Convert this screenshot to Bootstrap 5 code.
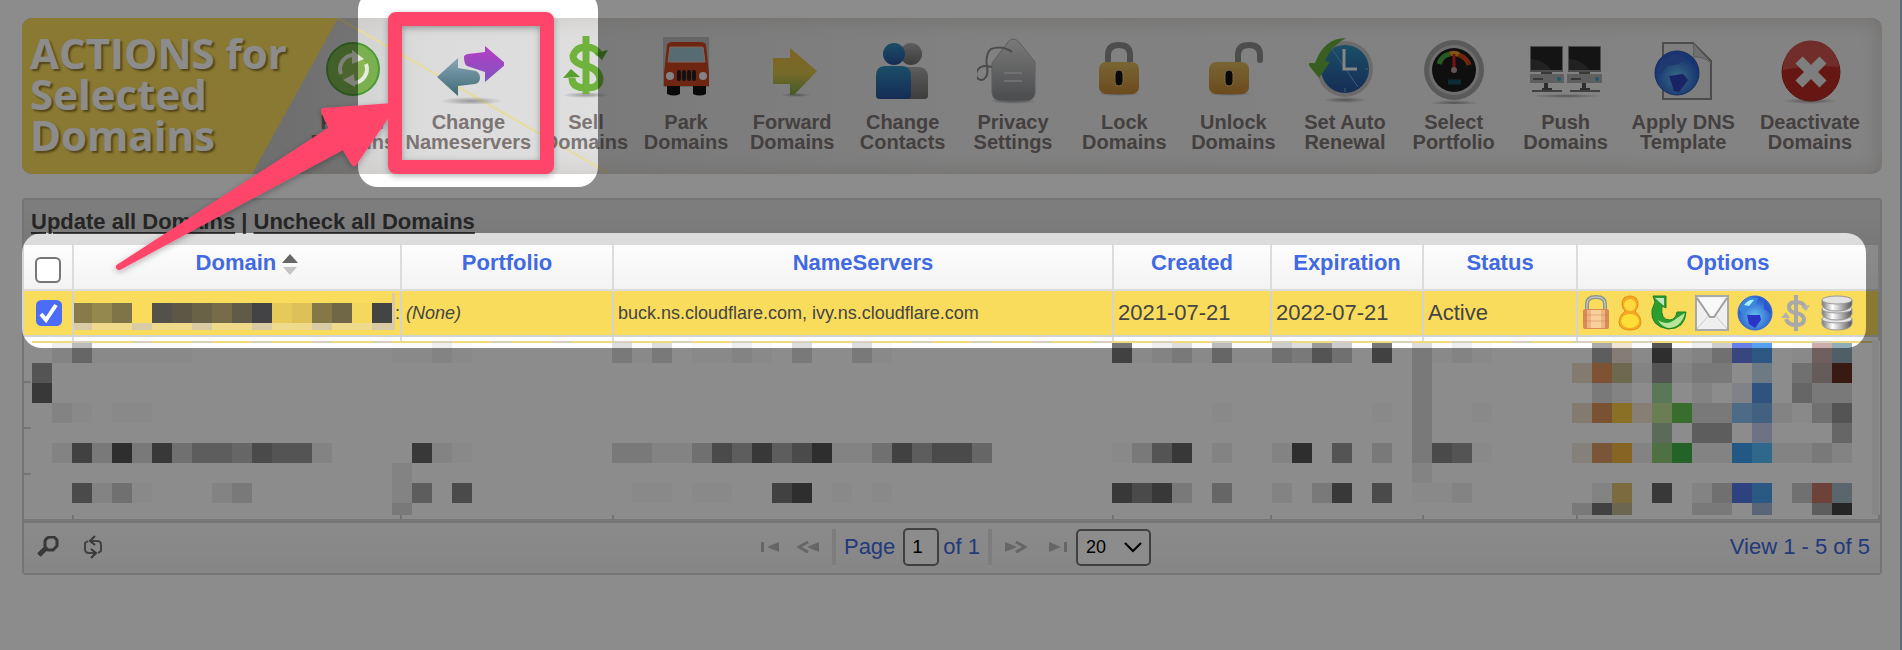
<!DOCTYPE html>
<html lang="en">
<head>
<meta charset="utf-8">
<meta name="viewport" content="width=device-width, initial-scale=1">
<title>Domain manager</title>
<link rel="stylesheet" href="https://cdn.jsdelivr.net/npm/bootstrap@5.3.0/dist/css/bootstrap.min.css">
<style>
body { font-family: "Liberation Sans", Arial, sans-serif; font-size: 22px; line-height: 26px; color: #444; background: #fff; }
.page { border-right: 2px solid #5b6b81; padding: 18px 18px 0 22px; }

/* Action bar */
.actionbar { height: 156px; border-radius: 10px; overflow: hidden; background: linear-gradient(90deg, #cacaca 14%, #dcdcdc 22%, #dedede 30%, #ebebeb 50%, #efefef 100%); box-shadow: inset 0 0 22px #cdc9c5; }
.actionbar h1 { width: 316px; flex: none; margin: 0; padding: 14px 0 0 8px; height: 156px; font: 700 42px/41px "Open Sans", "Noto Sans", sans-serif; color: #fff; text-shadow: 2px 2px 2px rgba(70,50,0,.55); background: #f9dc5c; clip-path: polygon(0 0, 100% 0, 230px 100%, 0 100%); }
.streak { left: 316px; top: 0; width: 270px; height: 156px; }
.actions { flex: 1; margin-left: -86px; padding-right: 22px; display: grid; justify-items: end; align-items: start; grid-template-columns: 143fr 136fr 97fr 100fr 106fr 111fr 107fr 114fr 109fr 110fr 109fr 113fr 127fr 125fr; }
.act { padding: 16px 0 0; border: 0; background: none; font-size: 20px; line-height: 20px; font-weight: 700; color: #7c7573; text-align: center; white-space: nowrap; }
.act svg { display: block; width: 72px; height: 70px; margin: 0 auto 8px; }

/* Grid */
.gridbox { margin-top: 24px; border: 2px solid #d5d5d5; border-radius: 4px; background: #fff; }
.caption { height: 45px; padding: 9px 7px 0; background: linear-gradient(#e6e6e6, #dbdbdb); font-weight: 700; }
.caption a { color: #444; text-decoration: underline; text-underline-offset: 3px; text-decoration-thickness: 2px; }
.dgrid { width: 100%; table-layout: fixed; border-collapse: separate; border-spacing: 0; }
.dgrid th { height: 46px; padding: 5px 0 0; vertical-align: top; text-align: center; color: #4169e1; background: linear-gradient(#fdfdfd, #f3f3f3); border-right: 2px solid #dcdcdc; border-bottom: 2px solid #dcdcdc; }
.dgrid .sorted { padding-left: 20px; }
.dgrid td { height: 46px; padding: 0 4px; background: #f9dc5c; border-right: 2px solid #d3d3d3; border-bottom: 2px solid #d3d3d3; white-space: nowrap; overflow: hidden; color: #444; line-height: 24px; }
.dgrid .f18 { font-size: 18px; }
.dgrid .rest { height: 182px; padding: 0; background: #fff; border: 0; }
.rest svg { display: block; width: 100%; }
.tick { width: 26px; height: 26px; margin: 0; display: block; border: 2px solid #767676; border-radius: 5px; box-shadow: none; }
.tick.form-check-input:checked { border-color: #4a6cf7; background-color: #4a6cf7; background-size: 22px; background-image: url("data:image/svg+xml,%3Csvg xmlns='http://www.w3.org/2000/svg' viewBox='0 0 22 22'%3E%3Cpath d='M3 12l5 6L18 3' fill='none' stroke='%23fff' stroke-width='4'/%3E%3C/svg%3E"); }
.optbtn { border: 0; background: none; padding: 0; flex: none; line-height: 0; }
.footer { border-top: 4px solid #d8d8d8; height: 54px; background: linear-gradient(#fcfcfc, #f4f4f4); color: #4169e1; padding: 0 10px 2px 13px; }
.side { flex: 1 1 0; }
.iconbtn { border: 0; background: none; padding: 0; line-height: 0; }
.sep { width: 4px; height: 36px; background: #e4e4e4; }
.pagebox { width: 36px; height: 38px; border: 2px solid #767676; border-radius: 5px; padding: 0 7px; font-size: 19px; color: #000; background: #fff; }
.sizebox { width: 75px; height: 37px; padding: 0 0 0 8px; border: 2px solid #767676; border-radius: 5px; font-size: 18px; color: #000; line-height: 30px; background-color: #fff; background-position: right 6px center; background-size: 20px; background-image: url("data:image/svg+xml,%3Csvg xmlns='http://www.w3.org/2000/svg' viewBox='0 0 20 20'%3E%3Cpath d='M2 6l8 8 8-8' fill='none' stroke='%23000' stroke-width='2'/%3E%3C/svg%3E"); }

/* Dimming layer and marker drawings above the page */
.veil { inset: 0; width: 100%; height: 100%; pointer-events: none; }
.spot-row { width: calc(100% - 56px); }
</style>
</head>
<body>
<main class="page position-relative min-vh-100">
  <section class="actionbar d-flex position-relative" aria-label="Actions">
    <svg class="streak position-absolute" viewBox="0 0 270 156"><path d="M0 0L270 155" stroke="#e8dc9c" stroke-width="2"/></svg>
    <h1>ACTIONS for<br>Selected<br>Domains</h1>
    <div class="actions position-relative">
      <button class="act" type="button"><svg viewBox="0 0 72 70"><circle cx="36" cy="35" r="26" fill="#7ab04f" stroke="#4c9a37" stroke-width="2"/><circle cx="36" cy="35" r="14" fill="#8cb655"/><path d="M24 40a14 14 0 0 1 12-19" fill="none" stroke="#e6eddc" stroke-width="4"/><path d="M35 16l12 9-12 5z" fill="#e6eddc"/><path d="M49 30a14 14 0 0 1-13 19" fill="none" stroke="#e6eddc" stroke-width="4"/><path d="M37 40L26 46l12 7z" fill="#e6eddc"/></svg>Renew<br>Domains</button>
      <button class="act" type="button"><svg viewBox="0 0 72 70"><defs><linearGradient id="gt" x2="0" y2="1"><stop stop-color="#8ba6b8"/><stop offset="1" stop-color="#3d6a72"/></linearGradient><linearGradient id="gp" x2="0" y2="1"><stop stop-color="#b73cc4"/><stop offset="1" stop-color="#7d55c0"/></linearGradient><radialGradient id="sh"><stop stop-color="#777" stop-opacity=".7"/><stop offset="1" stop-color="#777" stop-opacity="0"/></radialGradient></defs><ellipse cx="39" cy="67" rx="31" ry="4" fill="url(#sh)"/><path d="M5 43l21-19v10l18 3q4 2 4 7t-5 6l-17 2v10z" fill="url(#gt)"/><path d="M32 23q0-2 4-3l17-2V12l21 18-21 18V38l-18-6q-3-2-3-9z" fill="url(#gp)"/></svg>Change<br>Nameservers</button>
      <button class="act" type="button"><svg viewBox="0 0 72 70"><ellipse cx="36" cy="61" rx="24" ry="3" fill="url(#sh)"/><path d="M50 21Q46 13 36 13T23 22q0 7 13 10t14 13q0 9-14 9T22 44M36 2v58" fill="none" stroke="#6fb23c" stroke-width="7"/><path d="M45 19l13-3-6 10zM13 44l8-9 9 8z" fill="#55a02f"/></svg>Sell<br>Domains</button>
      <button class="act" type="button"><svg viewBox="0 0 72 70"><path d="M13 3h46v50H13z" fill="#bbb"/><path d="M17 50h13v10q-6 3-13 0zM43 50h13v10q-6 3-13 0z" fill="#111"/><path d="M17 11q1-3 5-3h29q4 0 5 3l3 28v13H14V39z" fill="#c94524"/><path d="M20 13h33l2 15H18z" fill="#9fc4cf" stroke="#e8bba8"/><path d="M29 38v7m5-7v7m5-7v7m5-7v7" stroke="#222" stroke-width="4" stroke-linecap="round"/><circle cx="20" cy="42" r="4" fill="#eee"/><circle cx="53" cy="42" r="4" fill="#eee"/></svg>Park<br>Domains</button>
      <button class="act" type="button"><svg viewBox="0 0 72 70"><defs><linearGradient id="gf" x2="0" y2="1"><stop stop-color="#eab543"/><stop offset=".55" stop-color="#d5c24a"/><stop offset="1" stop-color="#7ca545"/></linearGradient></defs><ellipse cx="40" cy="61" rx="15" ry="2" fill="url(#sh)"/><path d="M17 24h17V14l27 23-23 24h-4V50H17z" fill="url(#gf)"/></svg>Forward<br>Domains</button>
      <button class="act" type="button"><svg viewBox="0 0 72 70"><defs><linearGradient id="gb" x2="0" y2="1"><stop stop-color="#318fbd"/><stop offset="1" stop-color="#28529a"/></linearGradient><linearGradient id="gg" x2="0" y2="1"><stop stop-color="#aaa"/><stop offset="1" stop-color="#6e6e6e"/></linearGradient></defs><circle cx="44" cy="20" r="11" fill="url(#gg)"/><path d="M34 33h19q8 2 8 9v20q0 3-4 3H34z" fill="url(#gg)"/><circle cx="27" cy="20" r="11" fill="url(#gb)"/><path d="M9 42q0-10 9-10h17q9 0 9 10v20q0 3-4 3H13q-4 0-4-3z" fill="url(#gb)"/></svg>Change<br>Contacts</button>
      <button class="act" type="button"><svg viewBox="0 0 72 70"><defs><linearGradient id="gy" x2="0" y2="1"><stop stop-color="#ddd"/><stop offset="1" stop-color="#898b8e"/></linearGradient></defs><ellipse cx="36" cy="67" rx="24" ry="3" fill="url(#sh)"/><path d="M31 8q5-6 11 0l16 20v32q-2 7-10 7H25q-9 0-10-8V29z" fill="url(#gy)" stroke="#aaa"/><path d="M35 18Q25 11 14 15 8 20 10 33m0-1Q2 31-1 39q0 7 6 7 7-2 5-14l5 1" fill="none" stroke="#8b8b8b" stroke-width="2"/><path d="M27 39h18m-18 8h18" stroke="#ccc" stroke-width="2"/></svg>Privacy<br>Settings</button>
      <button class="act" type="button"><svg viewBox="0 0 72 70"><defs><linearGradient id="gl" x2="0" y2="1"><stop stop-color="#dcb95f"/><stop offset="1" stop-color="#c58735"/></linearGradient></defs><ellipse cx="31" cy="60" rx="22" ry="2" fill="url(#sh)"/><path d="M20 30v-9q0-10 11-10t11 10v9" fill="none" stroke="#8d8d8d" stroke-width="6"/><rect x="11" y="28" width="40" height="32" rx="7" fill="url(#gl)"/><rect x="27" y="36" width="8" height="16" rx="4" fill="#111" stroke="#dcc07a"/></svg>Lock<br>Domains</button>
      <button class="act" type="button"><svg viewBox="0 0 72 70"><ellipse cx="33" cy="60" rx="22" ry="2" fill="url(#sh)"/><path d="M41 30v-9q0-10 11-10t11 10v5" fill="none" stroke="#8d8d8d" stroke-width="6" stroke-linecap="round"/><rect x="12" y="28" width="40" height="32" rx="7" fill="url(#gl)"/><rect x="28" y="36" width="8" height="16" rx="4" fill="#111" stroke="#dcc07a"/></svg>Unlock<br>Domains</button>
      <button class="act" type="button"><svg viewBox="0 0 72 70"><ellipse cx="36" cy="66" rx="22" ry="3" fill="url(#sh)"/><circle cx="36" cy="35" r="28" fill="#c4c4c4"/><circle cx="36" cy="35" r="24" fill="url(#gb)"/><path d="M23 15l26 38M36 54v4M56 35h3" fill="none" stroke="#6cb0cf" stroke-width="1"/><path d="M35 15v20h13" fill="none" stroke="#f2f2f2" stroke-width="3"/><path d="M37 4Q15 4 6 29L-2 29 10 44 21 28l-5-1Q22 12 37 4z" fill="#67ac3d"/></svg>Set Auto<br>Renewal</button>
      <button class="act" type="button"><svg viewBox="0 0 72 70"><ellipse cx="36" cy="69" rx="24" ry="3" fill="url(#sh)"/><circle cx="36" cy="36" r="30" fill="#a5a5a5"/><circle cx="36" cy="36" r="25" fill="#c9c9c9"/><circle cx="36" cy="36" r="22" fill="#1d1d1d"/><path d="M21 30q3-9 11-10" fill="none" stroke="#4aa53c" stroke-width="5"/><path d="M32 20q5-2 9 1" fill="none" stroke="#e79a25" stroke-width="5"/><path d="M41 21q8 3 10 10" fill="none" stroke="#d24219" stroke-width="5"/><path d="M36 36V20" stroke="#d22" stroke-width="3"/><circle cx="36" cy="36" r="3" fill="#b99"/><path d="M30 48h13" stroke="#155060" stroke-width="5"/></svg>Select<br>Portfolio</button>
      <button class="act" type="button"><svg viewBox="0 0 72 70"><g id="pc"><path d="M0 12h33v26H0z" fill="#8a8a8a"/><path d="M1 13h31v23H1z" fill="#262626"/><path d="M1 25q14 1 20 11H1z" fill="#3c3c3c"/><path d="M-1 40h35v9H-1z" fill="#adadad"/><path d="M11 39h11M3 45h10" stroke="#666" stroke-width="2"/><circle cx="29" cy="45" r="2" fill="#2fa5c5"/><path d="M16 49v7m-4 0h10" stroke="#555" stroke-width="4"/><path d="M2 57h30" stroke="#777" stroke-width="2"/></g><use href="#pc" x="38"/><ellipse cx="36" cy="62" rx="36" ry="2" fill="url(#sh)"/></svg>Push<br>Domains</button>
      <button class="act" type="button"><svg viewBox="0 0 72 70"><defs><radialGradient id="gw" cy=".6"><stop stop-color="#64c4ee"/><stop offset="1" stop-color="#2d5fd0"/></radialGradient></defs><path d="M16 9h30l18 18v38H16z" fill="#e6e6e6" stroke="#8b8b8b" stroke-width="2"/><path d="M46 9q2 9 0 14 10-1 18 6" fill="#ccc" stroke="#aaa"/><circle cx="30" cy="39" r="22" fill="url(#gw)" stroke="#2750ae"/><path d="M16 25q12-8 22-2-4 8-12 8t-10 8q-6 2-6 0 1-10 6-14z" fill="#3a68c8"/><path d="M22 42l14-2 5 6-9 12-5-1z" fill="#3142b8"/></svg>Apply DNS<br>Template</button>
      <button class="act" type="button"><svg viewBox="0 0 72 70"><ellipse cx="36" cy="67" rx="27" ry="3" fill="url(#sh)"/><circle cx="37" cy="38" r="29" fill="#bb2b26" stroke="#a5231f"/><path d="M9 36a28 28 0 0 1 56-3Q40 30 9 36z" fill="#cc524d"/><path d="M25 26l24 24m0-24L25 50" stroke="#e6e6e6" stroke-width="10"/></svg>Deactivate<br>Domains</button>
    </div>
  </section>

  <section class="gridbox" aria-label="Domain list">
    <div class="caption"><a href="#">Update all Domains</a> | <a href="#">Uncheck all Domains</a></div>
    <table class="dgrid">
      <colgroup><col style="width:50px"><col style="width:328px"><col style="width:212px"><col><col style="width:158px"><col style="width:152px"><col style="width:154px"><col style="width:302px"></colgroup>
      <thead>
        <tr>
          <th scope="col" class="pt-2"><input type="checkbox" class="form-check-input tick mx-auto mt-1" aria-label="Select all domains"></th>
          <th scope="col" class="sorted">Domain <svg width="16" height="22" viewBox="0 0 16 22"><path d="M8 1l8 9H0z" fill="#666"/><path d="M8 22l7-8H1z" fill="#c4c4c4"/></svg></th>
          <th scope="col">Portfolio</th><th scope="col">NameServers</th><th scope="col">Created</th><th scope="col">Expiration</th><th scope="col">Status</th><th scope="col">Options</th>
        </tr>
      </thead>
      <tbody>
        <tr>
          <td><input type="checkbox" checked class="form-check-input tick ms-2" aria-label="Select this domain"></td>
          <td class="p-0"><div class="d-flex align-items-center f18"><svg id="redact" class="flex-shrink-0" width="321" height="40" viewBox="0 0 321 40" shape-rendering="crispEdges"></svg>:</div></td>
          <td class="f18"><em>(None)</em></td>
          <td class="f18">buck.ns.cloudflare.com, ivy.ns.cloudflare.com</td>
          <td>2021-07-21</td><td>2022-07-21</td><td>Active</td>
          <td><div class="d-flex align-items-center gap-2">
            <button class="optbtn" type="button" aria-label="Lock"><svg width="28" height="36" viewBox="0 0 28 36"><path d="M5 16V9q0-7 9-7t9 7v7" fill="none" stroke="#8f9590" stroke-width="4"/><path d="M5 16V9q0-7 9-7t9 7v7" fill="none" stroke="#d5d8cc" stroke-width="1"/><rect x="1" y="14" width="26" height="20" rx="2" fill="#d98a55"/><path d="M5 15h18v18H5z" fill="#edb486"/><path d="M9 15h10v18H9z" fill="#f7d09a"/><path d="M1 20h26M1 26h26" stroke="#c9774a" opacity=".4"/></svg></button>
            <button class="optbtn" type="button" aria-label="Contact"><svg width="24" height="36" viewBox="0 0 24 36"><path d="M12 1q8 0 8 8 0 4-3 7 6 5 6 11 0 8-11 8T1 27q0-6 6-11-3-3-3-7 0-8 8-8z" fill="#f5a821" stroke="#e79212"/><ellipse cx="12" cy="10" rx="6" ry="6" fill="#ffd93f"/><ellipse cx="12" cy="26" rx="9" ry="7" fill="#ffdf35"/></svg></button>
            <button class="optbtn" type="button" aria-label="Renew"><svg width="37" height="36" viewBox="0 0 37 36"><path d="M3 1h13v12l-4-2q-2 14 8 14 6-1 7-8h9Q35 34 18 34 0 31 2 15l3-8z" fill="#2c9e30" stroke="#1c8222"/><path d="M8 25q9 7 19-2l8-5Q31 33 18 33q-7-2-10-8z" fill="#b9e59a"/><path d="M5 3h9v8z" fill="#bfe6c0"/></svg></button>
            <button class="optbtn" type="button" aria-label="Email"><svg width="34" height="36" viewBox="0 0 34 36"><path d="M1 1h32v34H1z" fill="#efefef" stroke="#a9a9a9" stroke-width="2"/><path d="M2 34l12-14m18 14L20 20" stroke="#c9c9c9"/><path d="M2 3l13 19h4L32 3" fill="#f8f8f8" stroke="#a0a0a0" stroke-width="2"/></svg></button>
            <button class="optbtn" type="button" aria-label="DNS"><svg width="36" height="36" viewBox="0 0 36 36"><circle cx="18" cy="18" r="17" fill="url(#gw)" stroke="#3768d0"/><path d="M2 14Q5 4 13 2l8 1-3 8-9 3-3 6z" fill="#3c86e0"/><path d="M27 5q7 6 7 14l-7-5z" fill="#2b55d2"/><path d="M10 20l13 0 1 5-6 8-6-4z" fill="#2b35c5"/><path d="M7 10q5-6 10-5l-5 6z" fill="#a8f0ff"/></svg></button>
            <button class="optbtn" type="button" aria-label="Sell"><svg width="31" height="36" viewBox="0 0 31 36"><path d="M24 12Q22 7 15 7T8 12t7 6 8 6q0 6-8 6T5 24M15 0v36" fill="none" stroke="#a8a8a8" stroke-width="4"/><path d="M20 12l9-2-4 6zM0 23l5-6 4 6z" fill="#b2b2b2"/></svg></button>
            <button class="optbtn" type="button" aria-label="Hosting"><svg width="34" height="36" viewBox="0 0 34 36"><defs><linearGradient id="gd"><stop stop-color="#777"/><stop offset=".35" stop-color="#fff"/><stop offset="1" stop-color="#555"/></linearGradient></defs><g id="disk"><path d="M2 24v5q2 6 15 6t15-6v-5z" fill="url(#gd)" stroke="#999"/><ellipse cx="17" cy="24" rx="15" ry="4" fill="#e3e3e3" stroke="#999"/></g><use href="#disk" y="-10"/><use href="#disk" y="-19"/></svg></button>
          </div></td>
        </tr>
        <tr><td colspan="8" class="rest"><svg id="mosaic" height="182" viewBox="0 0 1856 182" preserveAspectRatio="none" shape-rendering="crispEdges"></svg></td></tr>
      </tbody>
    </table>
    <div class="footer d-flex align-items-center">
      <div class="side d-flex align-items-center gap-4">
        <button class="iconbtn" type="button" aria-label="Find"><svg width="22" height="22" viewBox="0 0 22 22"><path d="M9 3l3-2h5l3 3v6l-4 4h-5L8 11V5zM9 12l-7 7" fill="none" stroke="#666" stroke-width="3"/><path d="M8 13l-6 6" stroke="#666" stroke-width="5"/></svg></button>
        <button class="iconbtn" type="button" aria-label="Reload"><svg width="20" height="24" viewBox="0 0 20 24"><path d="M8 6h6q4 0 4 4v6l-3 2M12 18H6q-4 0-4-4V8l3-2" fill="none" stroke="#777" stroke-width="2"/><path d="M12 1L7 6l5 4M8 14l5 4-5 5" fill="none" stroke="#666" stroke-width="2"/></svg></button>
      </div>
      <div class="d-flex align-items-center ms-1">
        <button class="iconbtn me-3" type="button" aria-label="First page"><svg width="20" height="12" viewBox="0 0 20 12"><path d="M1 1h3v10H1zM19 1v10L7 6z" fill="#bbb"/></svg></button>
        <button class="iconbtn me-2" type="button" aria-label="Previous page"><svg width="24" height="12" viewBox="0 0 24 12"><path d="M23 1v10L11 6z" fill="#bbb"/><path d="M12 1L3 6l9 5" fill="none" stroke="#bbb" stroke-width="3"/></svg></button>
        <span class="sep mx-1"></span>
        <label for="pg" class="ms-1 me-2">Page</label><input id="pg" class="pagebox" value="1"><span class="ms-1 me-2">of 1</span>
        <span class="sep me-2"></span>
        <button class="iconbtn mx-1" type="button" aria-label="Next page"><svg width="24" height="12" viewBox="0 0 24 12"><path d="M1 1v10l12-5z" fill="#bbb"/><path d="M12 1l9 5-9 5" fill="none" stroke="#bbb" stroke-width="3"/></svg></button>
        <button class="iconbtn ms-3 me-2" type="button" aria-label="Last page"><svg width="20" height="12" viewBox="0 0 20 12"><path d="M1 1v10l12-5zM16 1h3v10h-3z" fill="#bbb"/></svg></button>
        <select class="form-select sizebox" aria-label="Rows per page"><option>20</option></select>
      </div>
      <div class="side text-end">View 1 - 5 of 5</div>
    </div>
  </section>

  <svg class="veil position-absolute" aria-hidden="true">
    <defs>
      <mask id="holes"><rect width="100%" height="100%" fill="#fff"/><rect x="358" y="-10" width="240" height="197" rx="20" fill="#000"/><rect class="spot-row" x="22" y="233" height="115" rx="20" fill="#000"/></mask>
      <filter id="soft" x="-10%" y="-10%" width="120%" height="120%"><feDropShadow dx="0" dy="2" stdDeviation="3" flood-opacity=".3"/></filter>
    </defs>
    <rect width="100%" height="100%" fill="#000" fill-opacity=".45" mask="url(#holes)"/>
    <g filter="url(#soft)">
      <rect x="395" y="19" width="152" height="148" rx="1" fill="none" stroke="#ff456b" stroke-width="14" stroke-linejoin="round"/>
      <path d="M119 267L344 146 354 163 393 106 324 111 332 129z" fill="#ff456b" stroke="#ff456b" stroke-width="6" stroke-linejoin="round"/>
    </g>
  </svg>
</main>
<script src="https://cdn.jsdelivr.net/npm/bootstrap@5.3.0/dist/js/bootstrap.bundle.min.js"></script>
<script>
// Pixelated cover for private rows: each entry is [first cell, shades], one hex digit per 20px cell.
const rows = [
  [[1,'14000'],[6,'00'],[18,'0010'],[29,'202'],[33,'0010'],[38,'2'],[41,'20'],[54,'80120400'],[62,'3263'],[67,'8'],[69,'2010'],[78,'5'],[80,'0a013'],[88,'0']],
  [[0,'6'],[69,'2'],[80,'16122'],[88,'3']],
  [[0,'9'],[69,'2'],[78,'21'],[83,'1'],[88,'422']],
  [[1,'10'],[4,'00'],[59,'0'],[67,'0'],[69,'2'],[72,'0'],[83,'22'],[87,'1036']],
  [[69,'2'],[83,'55'],[90,'4']],
  [[1,'182a29355476'],[13,'61'],[19,'910'],[29,'2211375957a'],[40,'113857'],[46,'74'],[54,'0269'],[59,'1'],[62,'1a'],[65,'6'],[67,'2'],[69,'2760'],[80,'1'],[83,'11'],[87,'1121']],
  [[18,'1'],[69,'1']],
  [[2,'7130'],[9,'12'],[18,'15'],[21,'7'],[30,'00'],[33,'00'],[37,'8a'],[40,'0'],[42,'0'],[54,'9792'],[59,'4'],[62,'1'],[64,'29'],[67,'7'],[69,'001'],[78,'1'],[81,'9'],[83,'13'],[88,'3']],
  [[18,'2'],[77,'28'],[83,'22'],[89,'5b']]
];
const tints = [
  {79:'#f2e4d5',84:'#cdcdcd',85:'#6680e7',86:'#55a0f0',89:'#ccaead',90:'#91adb8'},
  {77:'#f0e1cc',78:'#e3975f',79:'#c6bf90',86:'#c6def0',89:'#b8a7a7',90:'#663124'},
  {81:'#a4da9e',85:'#ecedf8',86:'#5795e7'},
  {77:'#f0e1cc',78:'#df955b',79:'#fbca45',80:'#f7e8d3',81:'#c3e597',82:'#69c655',85:'#8cc1f4',86:'#78b0e9'},
  {81:'#a5c4a5',86:'#c6cff2'},
  {77:'#f0e9de',78:'#e19c64',79:'#f4b843',81:'#8ecd7a',82:'#43b449',85:'#41a0f0',86:'#57bdfb'},
  {},
  {79:'#e0c371',85:'#5778e9',86:'#4ea4f0',89:'#c67866',90:'#a5bac3'},
  {79:'#c1ba91',86:'#a5bbda'}
];
const box = (x, y, w, h, fill, o = 1) => `<rect x="${x}" y="${y}" width="${w}" height="${h}" fill="${fill}" fill-opacity="${o}"/>`;
let out = '';
[48, 376, 588, 1088, 1246, 1398, 1552, 1854].forEach(x => { out += box(x, 0, 2, 4, '#dcdcdc') + box(x, 178, 2, 4, '#d3d3d3'); });
[44, 90, 136].forEach(y => { out += box(0, y, 7, 2, '#d8d8d8'); });
for (let k = 0; k < 92; k++) out += box(8 + 20 * k, 4, 20, 2, k % 3 === 2 ? '#d9d0ba' : '#f0da80');
rows.forEach((parts, r) => {
  const h = r === 8 ? 12 : 20, y = 6 + 20 * r;
  parts.forEach(([k, s]) => [...s].forEach((c, i) => { out += box(8 + 20 * (k + i), y, 20, h, '#000', Math.max(parseInt(c, 16) / 15, .02)); }));
  Object.entries(tints[r]).forEach(([k, c]) => { out += box(8 + 20 * k, y, 20, h, c); });
});
out += box(1848, 4, 7, 174, '#000', .04);
document.getElementById('mosaic').innerHTML = out;

const shades = ['#867b49','#95884c','#7f734a','','#54504a','#5d5846','#696246','#776c49','#5f5b48','#434346','#e5ca5a','#ddc158','#847946','#6f6746','#f4d75d','#444'];
let cover = '';
shades.forEach((c, i) => {
  const x = i * 20 - 2;
  if (c) cover += box(x, 10, 20, 20, c);
  cover += box(x, 30, 20, 7, i % 3 === 0 ? '#d9cba6' : '#efd98a');
});
document.getElementById('redact').innerHTML = cover + box(318, 0, 3, 37, '#d9cba6');
</script>
</body>
</html>
